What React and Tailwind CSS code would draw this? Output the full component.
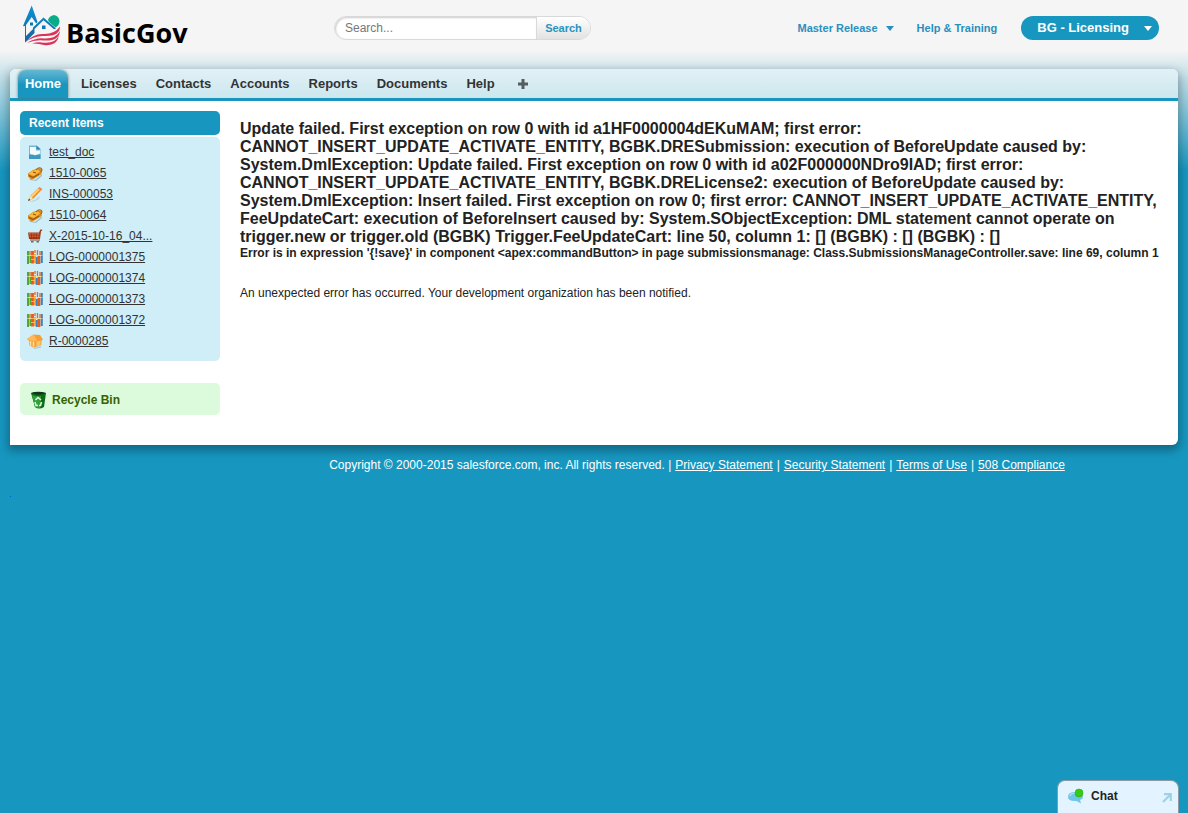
const recent = [
  ["doc", "test_doc"],
  ["tag", "1510-0065"],
  ["pencil", "INS-000053"],
  ["tag", "1510-0064"],
  ["cart", "X-2015-10-16_04..."],
  ["log", "LOG-0000001375"],
  ["log", "LOG-0000001374"],
  ["log", "LOG-0000001373"],
  ["log", "LOG-0000001372"],
  ["house", "R-0000285"],
];

const tabs = ["Licenses", "Contacts", "Accounts", "Reports", "Documents", "Help"];

const errorLines = [
  "Update failed. First exception on row 0 with id a1HF0000004dEKuMAM; first error:",
  "CANNOT_INSERT_UPDATE_ACTIVATE_ENTITY, BGBK.DRESubmission: execution of BeforeUpdate caused by:",
  "System.DmlException: Update failed. First exception on row 0 with id a02F000000NDro9IAD; first error:",
  "CANNOT_INSERT_UPDATE_ACTIVATE_ENTITY, BGBK.DRELicense2: execution of BeforeUpdate caused by:",
  "System.DmlException: Insert failed. First exception on row 0; first error: CANNOT_INSERT_UPDATE_ACTIVATE_ENTITY,",
  "FeeUpdateCart: execution of BeforeInsert caused by: System.SObjectException: DML statement cannot operate on",
  "trigger.new or trigger.old (BGBK) Trigger.FeeUpdateCart: line 50, column 1: [] (BGBK) : [] (BGBK) : []",
];

function ItemIcon({ kind }) {
  return (
    <svg viewBox="0 0 16 16" className="mt-px size-4 shrink-0" aria-hidden="true">
      {kind === "doc" && (
        <>
          <path d="M2 1.500h7.500L13.500 5v10H2z" fill="#6fb9d6" />
          <path d="M2 10.500h11.500V15H2z" fill="#3f97bf" />
          <path d="M3 3h6v3.500h4V9q-1 2-3 1.500-2 1.500-4 0-3 .5-3-1.500z" fill="#f4fafc" />
          <path d="M9.500 1.500l4 3.700h-4z" fill="#2f86ae" />
        </>
      )}
      {kind === "tag" && (
        <>
          <path d="M2 13l6 2 7-6v2l-6 5-6-1z" fill="#7f8d92" opacity=".5" />
          <path d="M1 8.500L6 5l6-2 3 2-.5 4-7 4.500-3 1-3.500-3z" fill="#d98716" />
          <path d="M1.500 8.500L6 5.500l5-1 2 2-6 4.500-3-1z" fill="#fcb93c" />
          <path d="M9 5q2-3 4.500-2 2.500 1 .5 4" fill="none" stroke="#a8650f" strokeWidth="1.200" />
          <path d="M2 10.500l4 2 6-3.500M6 7l3 1" stroke="#93560b" strokeWidth="1.100" fill="none" />
        </>
      )}
      {kind === "pencil" && (
        <>
          <path d="M2 15.500l6-1.500 5-4-1 3-5 2.500z" fill="#9fb5bd" opacity=".5" />
          <path d="M1 15l2.500-5.500L12 1.500l3 2L6 13z" fill="#f0922a" />
          <path d="M3.500 10L12 2l1.200 1L5 11.500z" fill="#ffd27a" />
          <path d="M11 2.500l1.500-1.500L15.500 3 14 4.500z" fill="#e88a68" />
          <path d="M1 15l2.500-5.500L6 13z" fill="#f9e2b8" />
          <path d="M1 15l1-2.500L3.500 14z" fill="#4d3826" />
        </>
      )}
      {kind === "cart" && (
        <>
          <path d="M1 4.500h11l1.300-3 2 .2-.2 1-1 .3-1.100 8H2z" fill="#a53b16" />
          <path d="M2 5.200h10v1.200H2zM2.600 7.800h9v1h-9z" fill="#dd6c38" />
          <path d="M4.500 5v6M7 5v6M9.500 5v6" stroke="#7a260a" strokeWidth=".5" />
          <path d="M3 11h10v2H3z" fill="#a5999a" />
          <path d="M4 13h2.500v1.500H4zM9.500 13H12v1.500H9.500z" fill="#68696e" />
        </>
      )}
      {kind === "log" && (
        <>
          <path d="M1 2v13M3.500 7v7" stroke="#5ba32c" strokeWidth="2" />
          <path d="M5.500 2v12.500M12 7v8" stroke="#e65a1b" strokeWidth="2.800" />
          <path d="M8 5v9" stroke="#f5a63a" strokeWidth="2" />
          <path d="M9.800 8v7M14.800 2v12" stroke="#3a83c5" strokeWidth="2" />
          <path d="M3 2v4M8 1v3M10.500 1v5M13 2v4" stroke="#dc6a25" strokeWidth="1.300" />
          <path d="M0 6.500h15.500M4 10.500h4" stroke="#ffd27a" strokeWidth=".7" />
        </>
      )}
      {kind === "house" && (
        <>
          <path d="M2 13l5 2 7-2v1.500L8 16z" fill="#8fa5ad" opacity=".5" />
          <path d="M0 6l6.500-4.500L13 2l3 4.500-1.500 1V12L7 14.500 2 12V8z" fill="#f3a03a" />
          <path d="M0 6l6.500-4.500L10 7 8.500 8 1 7z" fill="#ffb95a" />
          <path d="M3.500 8v4.500M6.500 8.500v5" stroke="#ffe29a" strokeWidth="1.500" />
          <path d="M9.500 8.500l4-1V12l-4 1.500z" fill="#fbc566" />
        </>
      )}
    </svg>
  );
}

function Logo() {
  return (
    <a href="#" aria-label="BasicGov" className="flex items-start text-black">
      <svg viewBox="0 0 40 42" className="mt-1 h-[42px] w-10" aria-hidden="true">
        <defs>
          <linearGradient id="walls" x1="0" y1="0" x2="0" y2="1">
            <stop offset="0" stopColor="#0a93d6" />
            <stop offset="1" stopColor="#1b5f9c" />
          </linearGradient>
        </defs>
        <path d="M26 16q1-4 6-5 5 1 5.500 6 0 4-4 6.500L27 18z" fill="#0aab88" />
        <path
          fill="url(#walls)"
          fillRule="evenodd"
          d="M9.700 1.500l5.800 16.500-1.300 1.600L9.700 13 4 21v11l7-7v-1.500L21.500 13.500 34 24.500l-2 .8L21.500 16.200 12.500 25v4L3 38.500V22l-2 .3L2 19.500z"
        />
        <path d="M8 18.500h3v3H8zM20 21.500h3.500v3.500H20z" fill="#0878b9" />
        <g fill="#dc3158">
          <path d="M3 38.500Q12 29 22 30q11 0 16-7.500 0 10-16 9.500Q12 31.500 3 38.500z" />
          <path d="M5 39q9-5.500 17-4.500 12 .5 16-7.500-1 10.500-16 9.500Q13 35.500 5 39z" />
          <path d="M10 39.500q6-2 12-.8 11 1 15-7.200-2 11-15 9.500-6-1.800-12-1.500z" />
        </g>
      </svg>
      <span className="mt-[15px] ml-1 font-['Open_Sans',sans-serif] text-[27px] leading-9 font-bold">BasicGov</span>
    </a>
  );
}

const Caret = () => (
  <svg viewBox="0 0 8 5" className="h-[5px] w-2" aria-hidden="true">
    <path d="M0 0h8L4 5z" fill="currentColor" />
  </svg>
);

export default function App() {
  return (
    <div className="flex min-h-screen flex-col bg-[#1797c0] bg-[linear-gradient(#f5f5f5_50px,#1797c0_170px)] font-['Liberation_Sans',Arial,sans-serif] text-xs text-[#222]">
      <header className="flex h-[69px] items-start pr-[29px] pl-[22px]">
        <div className="w-[312px] shrink-0">
          <Logo />
        </div>
        <form className="mt-4 flex h-6 w-[257px] shrink-0 overflow-hidden rounded-full border border-[#d9d9d9] bg-white" onSubmit={(e) => e.preventDefault()}>
          <input aria-label="Search" placeholder="Search..." className="min-w-0 flex-1 rounded-l-full pl-[10px] shadow-[inset_1px_1px_2px_#ccc] outline-none placeholder:text-[#777]" />
          <button className="w-[54px] border-l border-[#d9d9d9] bg-linear-to-b from-white to-[#e2e2e2] text-[11px] font-bold text-[#2a94be]">Search</button>
        </form>
        <nav className="mt-4 ml-auto flex h-6 items-center text-[11px] font-bold text-[#2a8fbd]">
          <button className="flex items-center gap-2">Master Release <Caret /></button>
          <a href="#" className="ml-[23px]">Help &amp; Training</a>
          <button className="ml-6 flex h-6 items-center gap-[15px] rounded-full bg-[#1797c0] pr-[7px] pl-4 text-[13px] text-white">
            BG - Licensing <Caret />
          </button>
        </nav>
      </header>

      <div className="mx-[10px] overflow-hidden rounded-md rounded-bl-none bg-white shadow-[0_4px_10px_2px_rgba(0,0,0,0.3)]">
        <nav className="flex h-8 items-end gap-px border-b-3 border-[#1797c0] bg-linear-to-b from-[#e3f1f6] to-[#cbe7ee] pl-2 text-[13px] font-bold text-[#333]">
          <a href="#" className="mr-[3px] flex h-7 w-[50px] items-center justify-center rounded-t-lg bg-linear-to-b from-[#63b8d3] to-[#1797c0] to-50% text-white shadow-[0_0_3px_#666]">Home</a>
          {tabs.map((tab) => (
            <a href="#" key={tab} className="flex h-7 items-center px-[9px]">{tab}</a>
          ))}
          <button aria-label="All tabs" className="flex h-7 items-center px-[13px]">
            <svg viewBox="0 0 10 10" className="size-[10px]" aria-hidden="true">
              <path d="M3.500 0h3v3.500H10v3H6.500V10h-3V6.500H0v-3h3.500z" fill="#555b5f" />
            </svg>
          </button>
        </nav>
        <div className="flex gap-5 px-[10px] pt-[10px] pb-[30px]">
          <aside className="w-[200px] shrink-0">
            <h2 className="h-6 rounded-[5px] bg-[#1797c0] px-[9px] leading-6 font-bold text-white">Recent Items</h2>
            <ul className="mt-[2px] rounded-[5px] bg-[#cfeef8] px-[7px] pt-1 pb-[10px] text-[#333]">
              {recent.map(([kind, name]) => (
                <li key={name} className="flex h-[21px] items-center gap-[6px]">
                  <ItemIcon kind={kind} />
                  <a href="#" className="underline underline-offset-1">{name}</a>
                </li>
              ))}
            </ul>
            <a href="#" className="mt-[22px] flex h-8 items-center gap-[5px] rounded-[5px] bg-[#dbfbdc] pt-[2px] pl-[10px] font-bold text-[#386200]">
              <svg viewBox="0 0 17 18" className="h-[18px] w-[17px]" aria-hidden="true">
                <path d="M1 2q7-2 15 0l-2 14q-5 3-9 0z" fill="#0d6b17" />
                <path d="M2 4q6 2 9 1l-1 12q-3 0-5-1z" fill="#2fa138" />
                <path d="M1 2q7-2.500 15 0-7 3.500-15 0z" fill="#12351a" />
                <path d="M5.500 9L8 6.500 11 9M5 11l1 3.500h2M11.500 11l-1 3.500H9" fill="none" stroke="#dff4df" strokeWidth="1.600" />
              </svg>
              Recycle Bin
            </a>
          </aside>
          <main className="min-w-0 pt-[9px]">
            <h1 className="text-base leading-[18px] font-bold">
              {errorLines.map((line) => (
                <span key={line} className="block">{line}</span>
              ))}
            </h1>
            <p className="leading-[14px] font-bold">
              {"Error is in expression '{!save}' in component <apex:commandButton> in page submissionsmanage: Class.SubmissionsManageController.save: line 69, column 1"}
            </p>
            <p className="mt-[25px] leading-4">An unexpected error has occurred. Your development organization has been notified.</p>
          </main>
        </div>
      </div>

      <footer className="mt-3 flex justify-center gap-1 pl-[206px] leading-4 text-white">
        <span>Copyright © 2000-2015 salesforce.com, inc. All rights reserved. |</span>
        <a href="#" className="underline">Privacy Statement</a>|
        <a href="#" className="underline">Security Statement</a>|
        <a href="#" className="underline">Terms of Use</a>|
        <a href="#" className="underline">508 Compliance</a>
      </footer>
      <div className="mt-[23px] ml-[10px] size-px bg-[#0060d0]" />

      <button className="fixed right-[9px] bottom-0 flex h-[33px] w-[122px] items-center rounded-t-lg border border-b-0 border-[#8a9aa2] bg-[#e3f3ff] pr-[6px] pb-[2px] pl-[9px] font-bold text-[#222]">
        <svg viewBox="0 0 17 16" className="mr-[7px] h-4 w-[17px]" aria-hidden="true">
          <path d="M1 9q0-5 7-5t8 5q0 2-3 3l1 3.500L9.500 13Q1 13.500 1 9z" fill="#6dc7e7" />
          <path d="M3 8q1-3 5-3" fill="none" stroke="#b5e6f6" strokeWidth="1.200" />
          <circle cx="12" cy="5" r="4" fill="#35cc12" stroke="#2aa616" strokeWidth=".6" />
        </svg>
        Chat
        <svg viewBox="0 0 10 10" className="mt-1 ml-auto size-[10px]" fill="none" stroke="#9bd3e6" strokeWidth="2.200" aria-hidden="true">
          <path d="M2 1.200h6.800V8M8.500 1.500L1 9" />
        </svg>
      </button>
    </div>
  );
}
